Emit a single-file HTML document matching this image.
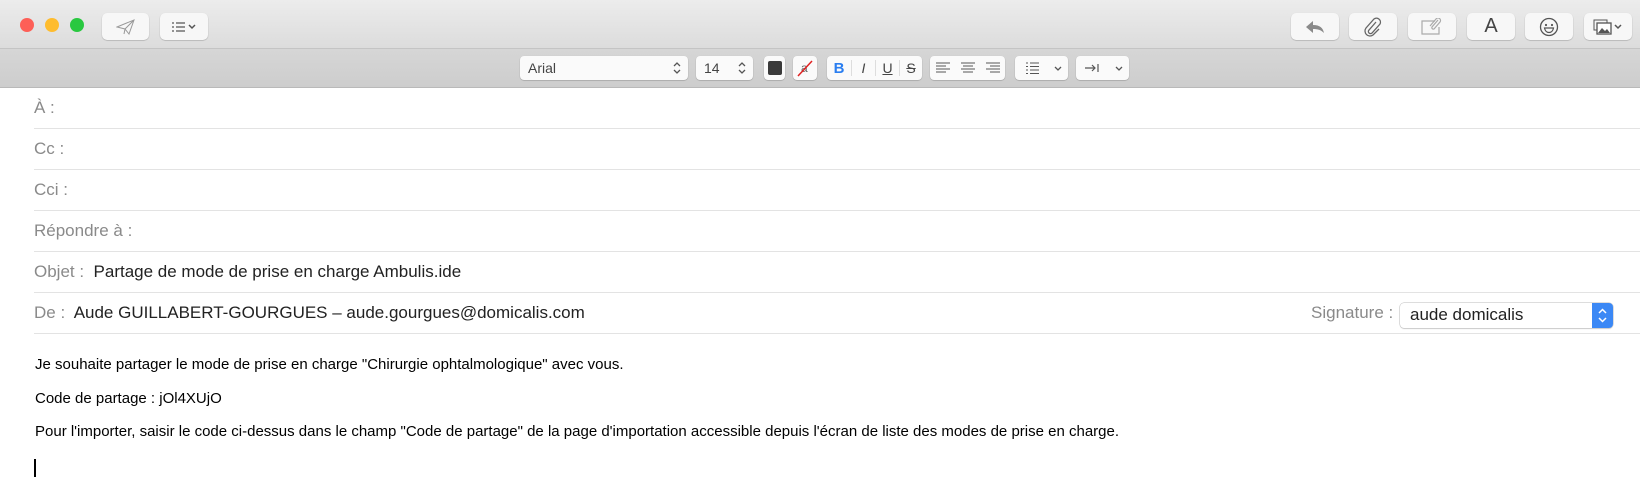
<!DOCTYPE html>
<html><head><meta charset="utf-8"><style>
*{box-sizing:border-box;margin:0;padding:0}
body{width:1646px;height:490px;background:#fff;font-family:"Liberation Sans",Arial,sans-serif;position:relative;overflow:hidden}
.tb{position:absolute;left:0;top:0;width:1640px;height:49px;background:linear-gradient(#ececec,#dcdcdc);border-bottom:1px solid #c4c4c4}
.fb{position:absolute;left:0;top:49px;width:1640px;height:39px;background:linear-gradient(#d6d6d6,#cdcdcd);border-bottom:1px solid #b9b9b9}
.dot{position:absolute;top:18px;width:14px;height:14px;border-radius:50%}
.btn{position:absolute;top:13px;height:27px;background:#f7f7f7;border-radius:5px;box-shadow:0 0.5px 1px rgba(0,0,0,.3);display:flex;align-items:center;justify-content:center;color:#666}
.fbt{position:absolute;top:7px;height:24px;background:#fafafa;border-radius:4px;box-shadow:0 0.5px 1px rgba(0,0,0,.3);font-size:14px;color:#444;display:flex;align-items:center}
.row{position:absolute;left:34px;width:1606px;border-bottom:1px solid #e3e3e3;height:41px;font-size:17px;color:#8a8a8a}
.row>span{position:absolute;top:10px}
.v{color:#222}
.body{position:absolute;left:35px;font-size:15px;color:#000}
</style></head><body>
<div class="tb">
<div class="dot" style="left:20px;background:#fd5f57"></div>
<div class="dot" style="left:45px;background:#febc2e"></div>
<div class="dot" style="left:70px;background:#29c840"></div>
<div class="btn" style="left:102px;width:47px"><svg width="20" height="16" viewBox="0 0 20 16"><path d="M1 8L18 1L13 15L9 10L1 8ZM18 1L9 10L8 15L9 10" fill="none" stroke="#999" stroke-width="1"/></svg></div>
<div class="btn" style="left:160px;width:48px"><svg width="26" height="12" viewBox="0 0 26 12"><path d="M1 2h2M5 2h9M1 6h2M5 6h9M1 10h2M5 10h9" stroke="#555" stroke-width="1.2"/><path d="M18 4l3 3 3-3" fill="none" stroke="#555" stroke-width="1.5"/></svg></div>
<div class="btn" style="left:1291px;width:48px"><svg width="20" height="14" viewBox="0 0 20 14"><path d="M8 1L1 7l7 6V9c5 0 8 1 11 4-1-5-4-8-11-8z" fill="#8a8a8a"/></svg></div>
<div class="btn" style="left:1349px;width:48px"><svg width="18" height="20" viewBox="0 0 18 20"><path d="M12 5L5 13a2 2 0 003 3l8-9a4 4 0 00-6-5L2 11a5 5 0 007 7l6-6" fill="none" stroke="#666" stroke-width="1.3"/></svg></div>
<div class="btn" style="left:1408px;width:48px"><svg width="24" height="18" viewBox="0 0 24 18"><path d="M15 3H2v13h17V9" fill="none" stroke="#aaa" stroke-width="1.2"/><path d="M18 2l-6 7a1.5 1.5 0 002 2l6-7a2.5 2.5 0 00-4-3l-6 7" fill="none" stroke="#aaa" stroke-width="1.2"/></svg></div>
<div class="btn" style="left:1467px;width:48px;font-size:20px;color:#444">A</div>
<div class="btn" style="left:1525px;width:48px"><svg width="20" height="20" viewBox="0 0 20 20"><circle cx="10" cy="10" r="8.5" fill="none" stroke="#555" stroke-width="1.3"/><circle cx="7" cy="8" r="1.1" fill="#555"/><circle cx="13" cy="8" r="1.1" fill="#555"/><path d="M5.5 11h9c-.5 3-2.5 4.5-4.5 4.5S6 14 5.5 11z" fill="none" stroke="#555" stroke-width="1.2"/></svg></div>
<div class="btn" style="left:1584px;width:48px"><svg width="30" height="16" viewBox="0 0 30 16"><rect x="1" y="1" width="13" height="10" fill="none" stroke="#555"/><rect x="4" y="4" width="14" height="11" fill="#fff" stroke="#555" stroke-width="1.3"/><path d="M5 14l4-5 3 3 2-2 3 4z" fill="#555"/><path d="M22 6l3 3 3-3" fill="none" stroke="#555" stroke-width="1.5"/></svg></div>
</div>
<div class="fb">
<div class="fbt" style="left:520px;width:168px;padding-left:8px">Arial<svg style="position:absolute;right:7px;top:5px" width="8" height="14" viewBox="0 0 8 14"><path d="M1 5l3-3 3 3M1 9l3 3 3-3" fill="none" stroke="#555" stroke-width="1.3"/></svg></div>
<div class="fbt" style="left:696px;width:57px;padding-left:8px">14<svg style="position:absolute;right:7px;top:5px" width="8" height="14" viewBox="0 0 8 14"><path d="M1 5l3-3 3 3M1 9l3 3 3-3" fill="none" stroke="#555" stroke-width="1.3"/></svg></div>
<div class="fbt" style="left:764px;width:21px;justify-content:center"><div style="width:14px;height:14px;background:#3a3a3a;border-radius:2px"></div></div>
<div class="fbt" style="left:793px;width:24px;justify-content:center"><svg width="18" height="18" viewBox="0 0 18 18"><text x="5" y="13" font-size="12" fill="#666" font-family="Liberation Sans">a</text><path d="M2 17L16 2" stroke="#e02020" stroke-width="1.5"/></svg></div>
<div class="fbt" style="left:827px;width:95px">
<span style="width:24px;text-align:center;color:#2a7ef0;font-weight:bold;font-size:15px">B</span><span style="width:24px;text-align:center;font-style:italic;border-left:1px solid #ddd">I</span><span style="width:24px;text-align:center;text-decoration:underline;border-left:1px solid #ddd">U</span><span style="width:23px;text-align:center;text-decoration:line-through;border-left:1px solid #ddd">S</span></div>
<div class="fbt" style="left:930px;width:75px"><svg width="75" height="14" viewBox="0 0 75 14"><path d="M6 2h14M6 5h10M6 8h14M6 11h10M31 2h14M33 5h10M31 8h14M33 11h10M56 2h14M60 5h10M56 8h14M60 11h10" stroke="#555" stroke-width="1.1"/></svg></div>
<div class="fbt" style="left:1015px;width:53px"><svg width="53" height="14" viewBox="0 0 53 14"><path d="M11 2h2M15 2h9M11 5.5h2M15 5.5h9M11 9h2M15 9h9M11 12.5h2M15 12.5h9" stroke="#555" stroke-width="1.1"/><path d="M40 6l3 3 3-3" fill="none" stroke="#555" stroke-width="1.3"/></svg></div>
<div class="fbt" style="left:1076px;width:53px"><svg width="53" height="14" viewBox="0 0 53 14"><path d="M9 7h10M16 4l3 3-3 3M22 3v8" fill="none" stroke="#555" stroke-width="1.2"/><path d="M40 6l3 3 3-3" fill="none" stroke="#555" stroke-width="1.3"/></svg></div>
</div>
<div class="row" style="top:88px"><span>À :</span></div>
<div class="row" style="top:129px"><span>Cc :</span></div>
<div class="row" style="top:170px"><span>Cci :</span></div>
<div class="row" style="top:211px"><span>Répondre à :</span></div>
<div class="row" style="top:252px"><span>Objet :&nbsp; <span class="v">Partage de mode de prise en charge Ambulis.ide</span></span></div>
<div class="row" style="top:293px"><span>De :&nbsp; <span class="v">Aude GUILLABERT-GOURGUES – aude.gourgues@domicalis.com</span></span>
<span style="left:1277px">Signature :</span>
<div style="position:absolute;left:1366px;top:10px;width:213px;height:25px;border-radius:4px;box-shadow:0 0 0 0.5px #bbb,0 1px 1px rgba(0,0,0,.15);background:#fff;color:#222;padding:2px 0 0 10px">aude domicalis<div style="position:absolute;right:0;top:0;width:21px;height:25px;background:#3b88f5;border-radius:0 4px 4px 0"><svg width="21" height="25" viewBox="0 0 21 25"><path d="M7 10l3.5-3.5L14 10M7 15l3.5 3.5L14 15" fill="none" stroke="#fff" stroke-width="1.5"/></svg></div></div>
</div>
<div class="body" style="top:356px">Je souhaite partager le mode de prise en charge "Chirurgie ophtalmologique" avec vous.</div>
<div class="body" style="top:390px">Code de partage : jOl4XUjO</div>
<div class="body" style="top:423px">Pour l'importer, saisir le code ci-dessus dans le champ "Code de partage" de la page d'importation accessible depuis l'écran de liste des modes de prise en charge.</div>
<div style="position:absolute;left:34px;top:459px;width:1.5px;height:18px;background:#000"></div>
</body></html>
